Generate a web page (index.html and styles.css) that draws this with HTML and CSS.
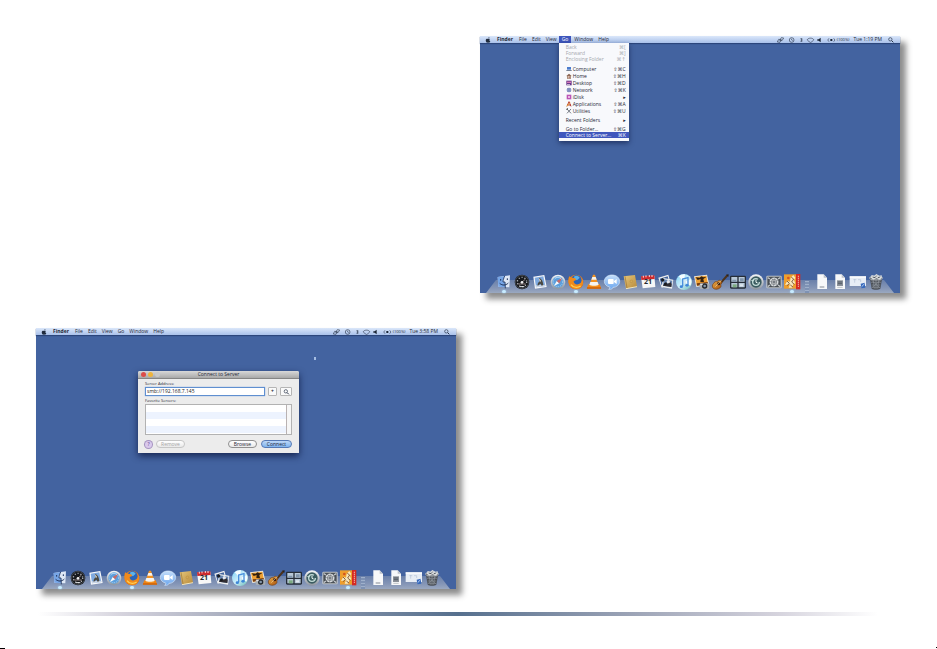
FILE: index.html
```html
<!DOCTYPE html>
<html lang="en">
<head>
<meta charset="utf-8">
<title>Connect to Server</title>
<link rel="stylesheet" href="styles.css">
</head>
<body>
<svg class="sprites" aria-hidden="true">
  <defs>
    <linearGradient id="g-silver" x1="0" y1="0" x2="0" y2="1"><stop offset="0" stop-color="#f4f6f8"/><stop offset="1" stop-color="#8c949e"/></linearGradient>
    <radialGradient id="g-fox" cx=".5" cy=".4" r=".6"><stop offset="0" stop-color="#ffc93c"/><stop offset=".7" stop-color="#ee7a16"/><stop offset="1" stop-color="#b7410c"/></radialGradient>
    <linearGradient id="g-bubble" x1="0" y1="0" x2="0" y2="1"><stop offset="0" stop-color="#c5defa"/><stop offset="1" stop-color="#6aa5ee"/></linearGradient>
    <linearGradient id="g-book" x1="0" y1="0" x2="1" y2="1"><stop offset="0" stop-color="#e6c67a"/><stop offset="1" stop-color="#b88a3a"/></linearGradient>
    <linearGradient id="g-disc" x1="0" y1="0" x2="1" y2="1"><stop offset="0" stop-color="#7fd2f5"/><stop offset=".5" stop-color="#cdeefb"/><stop offset="1" stop-color="#67b9b4"/></linearGradient>
    <linearGradient id="g-wood" x1="0" y1="0" x2="1" y2="1"><stop offset="0" stop-color="#f0b24a"/><stop offset="1" stop-color="#a6500b"/></linearGradient>
  </defs>

  <symbol id="finder" viewBox="0 0 54 54">
    <path d="M8 12L45 7l-2 36-33-2z" fill="#dfe8f6"/>
    <path d="M8 12l21-3c-3 7-5 13-5 18h6l1 16-21-2z" fill="#76a5e6"/>
    <path d="M29 9c-3 7-5 13-5 18h6l1 19" fill="none" stroke="#1e3158" stroke-width="2.5"/>
    <path d="M17 18v5M37 16v5M14 31c8 7 18 7 26-1" fill="none" stroke="#1e3158" stroke-width="3"/>
  </symbol>
  <symbol id="dashboard" viewBox="0 0 54 54">
    <circle cx="27" cy="27" r="22" fill="#17191d"/><circle cx="27" cy="27" r="20" fill="none" stroke="#555b62" stroke-width="2"/>
    <circle cx="27" cy="27" r="14" fill="none" stroke="#c3c6ca" stroke-width="4" stroke-dasharray="3 6"/>
    <path d="M27 27l10-8M16 33h22" stroke="#d8c0b8" stroke-width="2"/><circle cx="27" cy="28" r="4" fill="#f2f2f2"/><path d="M20 41h14" stroke="#e8eaec" stroke-width="3"/>
  </symbol>
  <symbol id="mail" viewBox="0 0 54 54">
    <path d="M7 11l33-5 7 36-35 5z" fill="#f7f8fa"/><path d="M11 14l26-4 6 29-28 4z" fill="#7ea9df"/>
    <path d="M15 37l28-2v5l-28 3z" fill="#cbd6e5"/><path d="M24 14c8 3 12 10 13 22l-5 2-4-6-8 7c-1-7 1-10 6-14z" fill="#4a4943"/><path d="M23 15l7 8-3 5z" fill="#e9e3d2"/>
  </symbol>
  <symbol id="safari" viewBox="0 0 54 54">
    <circle cx="27" cy="27" r="22" fill="url(#g-silver)"/><circle cx="27" cy="27" r="17" fill="#5c9fdc"/>
    <circle cx="27" cy="27" r="14" fill="none" stroke="#d5e9fa" stroke-width="3" stroke-dasharray="2 4"/><path d="M15 39l8-15 8 7z" fill="#f7f9fb"/><path d="M40 14L23 24l8 7z" fill="#c96a68"/><path d="M18 16c8-5 15-3 20 3" stroke="#b6daf8" stroke-width="3" fill="none"/>
  </symbol>
  <symbol id="firefox" viewBox="0 0 54 54">
    <circle cx="27" cy="27" r="22" fill="url(#g-fox)"/><circle cx="28" cy="22" r="16" fill="#2b65b8"/><path d="M22 10c6-4 12-2 16 4l-8 8-9-5z" fill="#5cb2ea"/>
    <path d="M7 10l7 5c6-2 12 1 14 6l-8 3c0 9 10 14 20 7 5-4 6-10 3-18 8 11 7 24-2 31-9 7-23 6-31-3C2 32 3 18 7 10z" fill="#f08a1b"/><path d="M12 35c7 9 19 10 29 4" stroke="#ffd155" stroke-width="4" fill="none"/>
  </symbol>
  <symbol id="vlc" viewBox="0 0 54 54">
    <path d="M10 34h34l5 13H5z" fill="#f18415"/><path d="M24 5h6l11 33c-6 5-22 5-28 0z" fill="#f39323"/>
    <path d="M22 12h10l3 8H19zM16 27h22l3 8c-6 4-22 4-28 0z" fill="#f6f5f2"/><path d="M6 45h42" stroke="#bd5407" stroke-width="3"/>
  </symbol>
  <symbol id="ichat" viewBox="0 0 54 54">
    <path d="M27 6c13 0 23 8 23 19S40 43 30 43c-1 5-7 6-13 6 4-3 4-5 3-7C10 40 4 33 4 25 4 14 14 6 27 6z" fill="url(#g-bubble)" stroke="#d8e8fb" stroke-width="2"/>
    <rect x="15" y="18" width="17" height="15" rx="3" fill="#fff"/><path d="M33 24l8-6v15l-8-6z" fill="#fff"/>
  </symbol>
  <symbol id="book" viewBox="0 0 54 54">
    <path d="M8 10l34-4 6 35-33 6z" fill="url(#g-book)"/><path d="M15 47l33-6" fill="none" stroke="#f2e5bd" stroke-width="3"/><path d="M12 10l6 35" stroke="#9a7335" stroke-width="2"/><circle cx="31" cy="25" r="4" fill="#d3a954" stroke="#a9803e"/>
  </symbol>
  <symbol id="ical" viewBox="0 0 54 54">
    <path d="M6 11l40-3 3 34-38 4z" fill="#f7f7f7"/><path d="M6 10l40-3 1 11-40 3z" fill="#cc2a2d"/><path d="M13 8v6M21 7v6M31 6v6M39 6v6" stroke="#f5dada" stroke-width="3"/>
  </symbol>
  <symbol id="photos" viewBox="0 0 54 54">
    <path d="M4 14l30-9 8 29-28 10z" fill="#f2f2f0"/><path d="M8 17l24-7 5 19-23 8z" fill="#43649c"/><path d="M18 15l31 5-4 27-31-5z" fill="#eceeef"/><path d="M21 19l25 4-3 19-25-4z" fill="#6886b0"/>
    <path d="M19 35l8-8 5 6 6-8 6 8-1 9-25-4z" fill="#302d31"/><circle cx="17" cy="21" r="5" fill="#191d24"/><circle cx="34" cy="26" r="5" fill="#e6e9ef"/><circle cx="25" cy="33" r="4" fill="#17191e"/>
  </symbol>
  <symbol id="itunes" viewBox="0 0 54 54">
    <circle cx="27" cy="27" r="24" fill="url(#g-disc)"/><path d="M27 27L11 10c5-5 12-7 19-6zM27 27l21-9c3 9 1 15-2 20z" fill="#f4fcff"/>
    <circle cx="27" cy="27" r="6" fill="#d4e9f4"/><path d="M23 40V18l16-4v23" fill="none" stroke="#4a90dc" stroke-width="4"/><ellipse cx="19" cy="41" rx="5" ry="4" fill="#3d86d8"/><ellipse cx="36" cy="37" rx="5" ry="4" fill="#3d86d8"/>
  </symbol>
  <symbol id="iphoto" viewBox="0 0 54 54">
    <path d="M3 10l39-5 7 31-39 6z" fill="#ede8dc"/><path d="M6 12l34-4 5 25-33 5z" fill="#efa032"/><path d="M8 13l12 1 5-4 7 3 9-2-10 7 2 9H22l1-9-9 3z" fill="#32200f"/><path d="M11 31l33-4 1 6-33 5z" fill="#7a3f12"/>
    <rect x="20" y="31" width="29" height="17" rx="4" fill="#a8adb0"/><circle cx="35" cy="39" r="8" fill="#25292e"/><circle cx="35" cy="39" r="4" fill="#8397aa"/><path d="M22 35h7" stroke="#eee" stroke-width="3"/>
  </symbol>
  <symbol id="garage" viewBox="0 0 54 54">
    <path d="M28 31L50 6" stroke="#4b321c" stroke-width="6"/><path d="M46 5l7-1-1 8" fill="#26201c"/><path d="M9 29c5-6 11-2 13-6 5-4 13 4 9 9-4 5 3 8-6 14-8 5-21 3-21-7 0-5 3-6 5-10z" fill="url(#g-wood)" stroke="#713c12" stroke-width="2"/>
    <circle cx="23" cy="32" r="5" fill="#43230e"/><path d="M13 41l17-18" stroke="#f7dfae" stroke-width="2"/>
  </symbol>
  <symbol id="spaces" viewBox="0 0 54 54">
    <rect x="3" y="8" width="48" height="39" rx="4" fill="#252d38"/><path d="M7 12h18v14H7zM29 12h18v14H29zM7 30h18v13H7zM29 30h18v13H29z" fill="#b9c9d8"/><path d="M10 20h12v6H10zM33 16h11v9H33z" fill="#8095ac"/><path d="M11 34h12v9H11z" fill="#7dab82"/><path d="M33 34h9v6h-9z" fill="#e1e8ef"/>
  </symbol>
  <symbol id="timemachine" viewBox="0 0 54 54">
    <circle cx="27" cy="27" r="23" fill="url(#g-silver)"/><circle cx="27" cy="27" r="17" fill="#3a5c60"/><circle cx="27" cy="27" r="10" fill="none" stroke="#c3dcd8" stroke-width="4" stroke-dasharray="52 11"/><path d="M27 20v8l5 2" stroke="#eff9f5" stroke-width="3" fill="none"/><path d="M12 21l5 7 5-7z" fill="#c3dcd8"/>
  </symbol>
  <symbol id="prefs" viewBox="0 0 54 54">
    <rect x="4" y="8" width="46" height="38" rx="4" fill="#c8cccf"/><rect x="7" y="11" width="40" height="32" fill="#4a5056"/><circle cx="27" cy="27" r="11" fill="none" stroke="#d6dadd" stroke-width="5" stroke-dasharray="8 1"/><circle cx="27" cy="27" r="6" fill="#777d83" stroke="#ebedee" stroke-width="2"/><path d="M8 14l7 4M46 14l-7 4M8 41l7-5M46 41l-7-5" stroke="#c2c6ca" stroke-width="4"/>
  </symbol>
  <symbol id="comic" viewBox="0 0 54 54">
    <path d="M3 4h41v43H3z" fill="#ee9e2d"/><path d="M39 3h13v46H39z" fill="#d42a24"/><path d="M46 8v34" stroke="#f5b5a8" stroke-width="3" stroke-dasharray="4 2"/>
    <path d="M6 36l7-13 8 3 2-12 8-8 6 8-4 7 4 10-6 3-3 10H17l4-10z" fill="#f8e7bb"/><path d="M12 24l7 7-6 7M25 13l7 5-6 9 8 7M22 36l8 6" fill="none" stroke="#6d4526" stroke-width="2.5"/><circle cx="16" cy="15" r="4" fill="#d55621"/>
  </symbol>
  <symbol id="document" viewBox="0 0 54 54">
    <path d="M13 4h19l10 10v34H13z" fill="#f7f8f9"/><path d="M32 4v10h10z" fill="#bcc2cb"/><path d="M20 42h14" stroke="#858b94" stroke-width="3"/>
  </symbol>
  <symbol id="report" viewBox="0 0 54 54">
    <path d="M13 4h19l10 10v34H13z" fill="#f7f8f9"/><path d="M32 4v10h10z" fill="#bcc2cb"/><path d="M18 22h18v17H18z" fill="#8a9098"/><path d="M21 27h12M21 32h12" stroke="#555d66" stroke-width="3"/><path d="M19 43h16" stroke="#a2a8ae" stroke-width="2"/>
  </symbol>
  <symbol id="window" viewBox="0 0 54 54">
    <path d="M2 10h49v29H2z" fill="#e7edf5"/><path d="M2 10h49v4H2z" fill="#fff"/><path d="M13 20h9M17 18v11M27 20h8v7" fill="none" stroke="#b3c1d8" stroke-width="2"/><path d="M35 32l12-3 2 15-12 2z" fill="#3769bb"/><path d="M38 41l8-8" stroke="#b8d1f5" stroke-width="3"/>
  </symbol>
  <symbol id="trash" viewBox="0 0 54 54">
    <path d="M8 13h38l-6 34c-6 4-20 4-26 0z" fill="#4c5158"/><path d="M11 20h32M12 28h30M14 36h26M16 43h22M18 17l4 30M27 17v31M36 17l-4 30M12 20l27 25M42 20L15 44" stroke="#9ba1a9" stroke-width="1.5"/>
    <path d="M10 14l4-8 8 2 6-5 9 5 7-1 1 8-8 5-9-4-8 4z" fill="#dddfe1"/><path d="M17 12l7 2 5-6M32 15l8-4" stroke="#4f565f" stroke-width="3" fill="none"/><ellipse cx="27" cy="15" rx="20" ry="6" fill="none" stroke="#c4c8cc" stroke-width="2"/>
  </symbol>

  <symbol id="apple" viewBox="0 0 18 18"><path d="M10 4c0-2 1-3 3-4 0 3-1 4-3 4zM15 6c-3 2-2 6 1 7-1 3-3 5-5 4-1-1-2-1-4 0-3 1-7-8-3-11 2-1 3-1 5 0 2-1 4-1 6 0z" fill="#202b3d"/></symbol>
  <symbol id="status" viewBox="0 0 180 18">
    <g fill="none" stroke="#344054" stroke-width="2">
      <path d="M8 10l5-8 7 1-5 8zM1 15l4-8 8 1-4 8z"/><circle cx="44" cy="9" r="7"/><path d="M44 5v4l3 2"/><path d="M71 4l5 8-3 3V3l3 3-5 8" stroke-width="1.5"/>
      <path d="M91 8c2-6 17-6 19 0 0 3-6 6-9 9-4-3-10-6-10-9z"/><path d="M156 4c-4 3-4 7 0 10M170 4c4 3 4 7 0 10"/>
    </g><path d="M121 7h4l6-5v14l-6-5h-4zM160 6h6v6h-6z" fill="#1b2534"/>
  </symbol>
  <symbol id="search" viewBox="0 0 18 18"><circle cx="7" cy="7" r="5" fill="none" stroke="#263247" stroke-width="2"/><path d="M11 11l5 5" stroke="#263247" stroke-width="3"/></symbol>
  <symbol id="m-computer" viewBox="0 0 18 18"><path d="M3 3h12v8H3z" fill="#4c7ccc"/><path d="M1 12h16v3H1z" fill="#768296"/></symbol>
  <symbol id="m-home" viewBox="0 0 18 18"><path d="M1 9l8-7 8 7-2 1v7H3v-7z" fill="#8b6652"/><path d="M5 9h8v7H5z" fill="#efe4d5"/><path d="M8 10h3v6H8z" fill="#985041"/></symbol>
  <symbol id="m-desktop" viewBox="0 0 18 18"><path d="M1 2h16v14H1z" fill="#68368b"/><path d="M3 5h12v4H3z" fill="#d47bb6"/><path d="M3 12h9v2H3z" fill="#eee"/></symbol>
  <symbol id="m-network" viewBox="0 0 18 18"><circle cx="9" cy="9" r="7" fill="#6373ac"/><path d="M2 9h14M9 2c-5 5-5 9 0 14M9 2c5 5 5 9 0 14" fill="none" stroke="#dde4f8" stroke-width="1"/></symbol>
  <symbol id="m-idisk" viewBox="0 0 18 18"><path d="M2 2h14v14H2z" fill="#bb55b6"/><circle cx="9" cy="9" r="3" fill="#f6d8f2"/></symbol>
  <symbol id="m-apps" viewBox="0 0 18 18"><path d="M3 16L9 2l6 14M4 12h11" fill="none" stroke="#b5372d" stroke-width="3"/><path d="M2 16L12 5" stroke="#e7aa3c" stroke-width="3"/></symbol>
  <symbol id="m-utils" viewBox="0 0 18 18"><path d="M3 3l12 13M15 3L3 16" stroke="#767c86" stroke-width="3"/><path d="M1 4l5-2" stroke="#333" stroke-width="3"/></symbol>
</svg>

<main class="page">
  <div class="shots">
    <section class="desktop desktop-menu" aria-label="Go menu">
      <nav class="menubar">
        <button class="apple" aria-label="Apple menu"><svg><use href="#apple"/></svg></button>
        <button class="app-name">Finder</button><button>File</button><button>Edit</button><button>View</button>
        <div class="menu-anchor">
          <button class="open">Go</button>
          <div class="dropdown">
            <div class="group muted">
              <button>Back<kbd>⌘[</kbd></button>
              <button>Forward<kbd>⌘]</kbd></button>
              <button>Enclosing Folder<kbd>⌘↑</kbd></button>
            </div>
            <div class="group places">
              <button><svg><use href="#m-computer"/></svg>Computer<kbd>⇧⌘C</kbd></button>
              <button><svg><use href="#m-home"/></svg>Home<kbd>⇧⌘H</kbd></button>
              <button><svg><use href="#m-desktop"/></svg>Desktop<kbd>⇧⌘D</kbd></button>
              <button><svg><use href="#m-network"/></svg>Network<kbd>⇧⌘K</kbd></button>
              <button><svg><use href="#m-idisk"/></svg>iDisk<kbd>▸</kbd></button>
              <button><svg><use href="#m-apps"/></svg>Applications<kbd>⇧⌘A</kbd></button>
              <button><svg><use href="#m-utils"/></svg>Utilities<kbd>⇧⌘U</kbd></button>
            </div>
            <div class="group"><button>Recent Folders<kbd>▸</kbd></button></div>
            <div class="group">
              <button>Go to Folder...<kbd>⇧⌘G</kbd></button>
              <button class="selected">Connect to Server...<kbd>⌘K</kbd></button>
            </div>
          </div>
        </div>
        <button>Window</button><button>Help</button>
        <div class="tray"><svg class="status"><use href="#status"/></svg><span class="charge">(100%)</span><time>Tue 1:19 PM</time><svg class="search"><use href="#search"/></svg></div>
      </nav>
      <div class="dock">
        <button class="running" aria-label="Finder"><svg><use href="#finder"/></svg></button>
        <button aria-label="Dashboard"><svg><use href="#dashboard"/></svg></button>
        <button aria-label="Mail"><svg><use href="#mail"/></svg></button>
        <button aria-label="Safari"><svg><use href="#safari"/></svg></button>
        <button class="running" aria-label="Firefox"><svg><use href="#firefox"/></svg></button>
        <button aria-label="VLC"><svg><use href="#vlc"/></svg></button>
        <button aria-label="iChat"><svg><use href="#ichat"/></svg></button>
        <button aria-label="Address Book"><svg><use href="#book"/></svg></button>
        <button aria-label="iCal"><svg><use href="#ical"/></svg><span class="cal-day">21</span></button>
        <button aria-label="Preview"><svg><use href="#photos"/></svg></button>
        <button aria-label="iTunes"><svg><use href="#itunes"/></svg></button>
        <button aria-label="iPhoto"><svg><use href="#iphoto"/></svg></button>
        <button aria-label="GarageBand"><svg><use href="#garage"/></svg></button>
        <button aria-label="Spaces"><svg><use href="#spaces"/></svg></button>
        <button aria-label="Time Machine"><svg><use href="#timemachine"/></svg></button>
        <button aria-label="System Preferences"><svg><use href="#prefs"/></svg></button>
        <button class="running" aria-label="Comic Life"><svg><use href="#comic"/></svg></button>
        <span class="divider"></span>
        <button aria-label="Document"><svg><use href="#document"/></svg></button>
        <button aria-label="Report"><svg><use href="#report"/></svg></button>
        <button aria-label="Minimized window"><svg><use href="#window"/></svg></button>
        <button aria-label="Trash"><svg><use href="#trash"/></svg></button>
      </div>
    </section>

    <section class="desktop desktop-dialog" aria-label="Connect to Server">
      <nav class="menubar">
        <button class="apple" aria-label="Apple menu"><svg><use href="#apple"/></svg></button>
        <button class="app-name">Finder</button><button>File</button><button>Edit</button><button>View</button><button>Go</button><button>Window</button><button>Help</button>
        <div class="tray"><svg class="status"><use href="#status"/></svg><span class="charge">(100%)</span><time>Tue 3:58 PM</time><svg class="search"><use href="#search"/></svg></div>
      </nav>
      <span class="pointer"></span>
      <form class="dialog">
        <header class="titlebar"><span class="lights"><i class="close"></i><i class="minimize"></i><i class="expand"></i></span>Connect to Server</header>
        <div class="dialog-body">
          <label for="address">Server Address:</label>
          <div class="address-row">
            <input id="address" type="text" value="smb://192.168.7.145">
            <button type="button" class="square">+</button>
            <button type="button" class="square recent" aria-label="Recent servers"><svg><use href="#search"/></svg></button>
          </div>
          <span class="label" id="favorites">Favorite Servers:</span>
          <div class="favorites" role="listbox" aria-labelledby="favorites"></div>
          <div class="actions">
            <button type="button" class="help">?</button>
            <button type="button" class="pill" disabled>Remove</button>
            <button type="button" class="pill browse">Browse</button>
            <button type="button" class="pill primary">Connect</button>
          </div>
        </div>
      </form>
      <div class="dock">
        <button class="running" aria-label="Finder"><svg><use href="#finder"/></svg></button>
        <button aria-label="Dashboard"><svg><use href="#dashboard"/></svg></button>
        <button aria-label="Mail"><svg><use href="#mail"/></svg></button>
        <button aria-label="Safari"><svg><use href="#safari"/></svg></button>
        <button class="running" aria-label="Firefox"><svg><use href="#firefox"/></svg></button>
        <button aria-label="VLC"><svg><use href="#vlc"/></svg></button>
        <button aria-label="iChat"><svg><use href="#ichat"/></svg></button>
        <button aria-label="Address Book"><svg><use href="#book"/></svg></button>
        <button aria-label="iCal"><svg><use href="#ical"/></svg><span class="cal-day">21</span></button>
        <button aria-label="Preview"><svg><use href="#photos"/></svg></button>
        <button aria-label="iTunes"><svg><use href="#itunes"/></svg></button>
        <button aria-label="iPhoto"><svg><use href="#iphoto"/></svg></button>
        <button aria-label="GarageBand"><svg><use href="#garage"/></svg></button>
        <button aria-label="Spaces"><svg><use href="#spaces"/></svg></button>
        <button aria-label="Time Machine"><svg><use href="#timemachine"/></svg></button>
        <button aria-label="System Preferences"><svg><use href="#prefs"/></svg></button>
        <button class="running" aria-label="Comic Life"><svg><use href="#comic"/></svg></button>
        <span class="divider"></span>
        <button aria-label="Document"><svg><use href="#document"/></svg></button>
        <button aria-label="Report"><svg><use href="#report"/></svg></button>
        <button aria-label="Minimized window"><svg><use href="#window"/></svg></button>
        <button aria-label="Trash"><svg><use href="#trash"/></svg></button>
      </div>
    </section>
  </div>
  <hr class="rule">
  <footer class="edge-marks"><span class="mark-left"></span><span class="mark-right"></span></footer>
</main>
</body>
</html>
```

FILE: styles.css
```css
* { box-sizing: border-box; }

body {
  margin: 0;
  background: #fff;
  color: #1f2836;
  font: 5px/7px "Open Sans", "DejaVu Sans", sans-serif;
}

button {
  padding: 0;
  border: 0;
  background: none;
  color: inherit;
  font: inherit;
}

svg { display: block; }
.sprites { position: absolute; width: 0; height: 0; }

.page {
  display: flex;
  flex-direction: column;
  min-height: 100vh;
}

.shots {
  display: grid;
  grid-template-columns: 1fr 1fr;
  gap: 35px 24px;
  padding: 36px 37px 0 36px;
}

.desktop {
  position: relative;
  display: flex;
  flex-direction: column;
  background: #4363a0;
  box-shadow: 6px 6px 6px rgba(0, 0, 0, 0.45);
}

.desktop-menu { grid-column: 2; aspect-ratio: 420 / 257; }
.desktop-dialog { grid-column: 1; aspect-ratio: 420 / 261; }

/* Menu bar */
.menubar {
  display: flex;
  height: 7px;
  padding: 0 6px 0 2px;
  background: linear-gradient(#dbe7fa, #a9c1ea);
  box-shadow: 0 1px 1px #2c467c;
}

.menubar > button { padding: 0 2px 0 3px; white-space: nowrap; }
.menubar .apple,
.menubar .app-name,
.menu-anchor > button { padding: 0 3px; }
.apple svg { width: 6px; height: 6px; }
.menubar .app-name { font-weight: bold; }
.menu-anchor { position: relative; }
.menu-anchor .open {
  display: block;
  background: #3f57bd;
  color: #fff;
}

.tray {
  display: flex;
  align-items: center;
  margin-left: auto;
  white-space: nowrap;
}

.status { width: 60px; height: 6px; }
.charge { margin-right: 4px; font-size: 4px; }
.tray time { margin-right: 6px; }
.search { width: 6px; height: 6px; }

/* Pull-down menu */
.dropdown {
  position: absolute;
  z-index: 2;
  top: 7px;
  left: 0;
  display: flex;
  flex-direction: column;
  gap: 3px;
  width: 70px;
  padding: 1px 0 3px;
  background: #f8f9fc;
  box-shadow: 0 2px 5px rgba(10, 20, 60, 0.6);
}

.group { display: flex; flex-direction: column; }
.group button {
  display: flex;
  align-items: center;
  height: 6px;
  padding: 0 3px 0 7px;
  line-height: 6px;
  white-space: nowrap;
}
.group svg { width: 6px; height: 6px; margin-right: 1px; }
.places button { height: 7px; }
.muted { color: #a4a7ad; }
.group kbd { margin-left: auto; font: inherit; }
.group .selected { background: #3f57bd; color: #fff; }

/* Dock */
.dock {
  position: relative;
  display: flex;
  justify-content: center;
  height: 23px;
  margin-top: auto;
}

.dock::before {
  content: "";
  position: absolute;
  inset: 10px 6px 0;
  background: linear-gradient(#6a80aa, #8495b6 60%, #9aa8c0);
  clip-path: polygon(10px 0, calc(100% - 10px) 0, 100% 100%, 0 100%);
}

.dock button {
  position: relative;
  width: 18px;
  height: 23px;
}
.dock svg { width: 18px; height: 18px; }
.dock .running::after {
  content: "";
  position: absolute;
  left: 7px;
  bottom: 0;
  width: 4px;
  height: 3px;
  border-radius: 50%;
  background: #c9ecff;
  box-shadow: 0 0 2px #a6dcff;
}
.cal-day {
  position: absolute;
  top: 8px;
  left: 0;
  width: 18px;
  color: #25282d;
  font-size: 7px;
  font-weight: bold;
  line-height: 8px;
  text-align: center;
}
.divider {
  position: relative;
  width: 4px;
  height: 12px;
  margin: 11px 4px 0;
  background: repeating-linear-gradient(#9fb0cb 0 1px, #7e92b4 1px 3px);
}

/* Connect dialog */
.pointer {
  position: absolute;
  top: 29px;
  left: 278px;
  width: 2px;
  height: 3px;
  background: #a5bde3;
}

.dialog {
  position: absolute;
  top: 43px;
  left: 102px;
  width: 161px;
  background: #ececec;
  border-radius: 2px 2px 0 0;
  box-shadow: 0 3px 7px rgba(8, 18, 55, 0.75);
}

.titlebar {
  position: relative;
  height: 8px;
  border-bottom: 1px solid #858585;
  border-radius: 2px 2px 0 0;
  background: linear-gradient(#d8d8d8, #a9a9a9);
  text-align: center;
}

.lights { position: absolute; top: 1px; left: 3px; display: flex; gap: 2px; }
.lights i { width: 5px; height: 5px; border-radius: 50%; }
.close { background: #dc4d49; }
.minimize { background: #efb43c; }
.expand { background: #c9c9c9; }

.dialog-body {
  display: flex;
  flex-direction: column;
  padding: 1px 7px 5px;
}

.dialog-body label,
.label { font-size: 4px; line-height: 7px; }

.address-row { display: flex; gap: 3px; height: 9px; }
.address-row input {
  flex: 1;
  min-width: 0;
  padding: 0 1px;
  border: 1px solid #5f8fd0;
  outline: 0;
  background: #fff;
  color: #222;
  font: inherit;
  box-shadow: 0 0 1px #6b9be0;
}

.square {
  width: 9px;
  border: 1px solid #b5b5b5;
  border-radius: 1px;
  background: #fafafa;
  font-weight: bold;
}
.recent { width: 12px; }
.recent svg { width: 7px; height: 6px; margin: 0 auto; }

.label { margin-top: 1px; }
.favorites {
  height: 31px;
  border: 1px solid #b2b2b2;
  background:
    linear-gradient(90deg, transparent calc(100% - 5px), #b9b2b2 calc(100% - 5px) calc(100% - 4px), #f6f6f6 calc(100% - 4px)),
    repeating-linear-gradient(#fff 0 7px, #edf3fe 7px 14px);
}

.actions {
  display: flex;
  align-items: center;
  gap: 4px;
  margin-top: 5px;
}

.help {
  width: 7px;
  height: 7px;
  border-radius: 50%;
  background: #d9c9ec;
  box-shadow: 0 0 0 1px #a593c0;
  color: #5a3a8c;
  line-height: 7px;
}

.pill {
  width: 29px;
  height: 8px;
  border: 1px solid #8f8f8f;
  border-radius: 4px;
  background: linear-gradient(#fff, #e9e9e9);
  line-height: 6px;
}
.pill:disabled { border-color: #c6c6c6; color: #a5a5a5; }
.browse { margin-left: auto; }
.primary { width: 31px; border-color: #5479b5; background: linear-gradient(#bdd8f7, #7fb4ef); }

/* Page foot */
.rule {
  width: calc(100% - 97px);
  height: 4px;
  margin: 23px 59px 0 38px;
  border: 0;
  background: linear-gradient(90deg, #fff, #d5d3dd 10%, #9aa2b5 27%, #56708e 50%, #9aa2b5 70%, #d5d3dd 88%, #fff);
}

.edge-marks {
  display: flex;
  justify-content: space-between;
  align-items: flex-end;
  height: 2px;
  margin-top: auto;
}
.mark-left { width: 5px; height: 1px; background: #000; }
.mark-right { align-self: flex-start; width: 1px; height: 1px; background: #000; }
```
